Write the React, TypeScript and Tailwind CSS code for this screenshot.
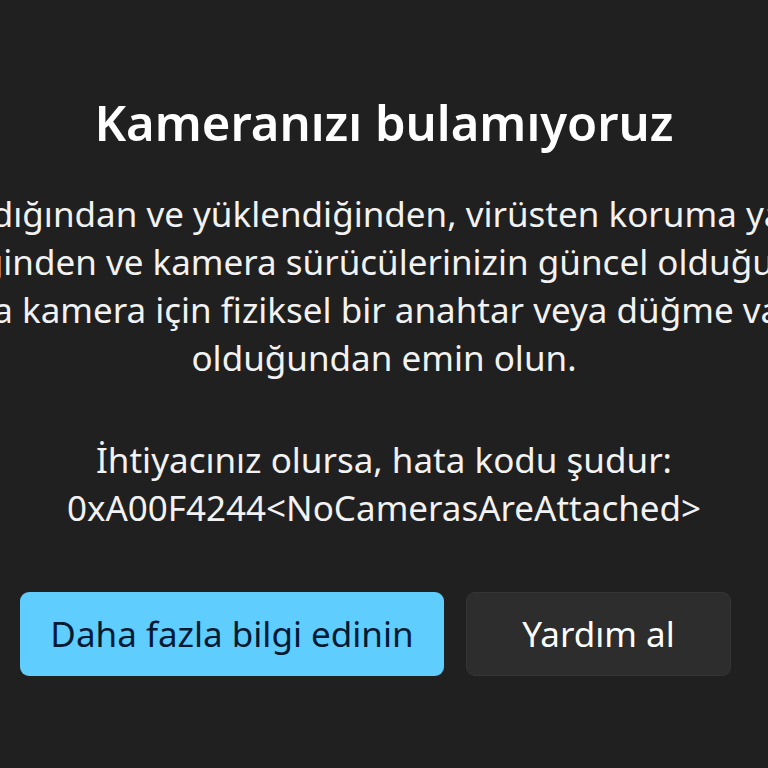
import React from "react";

const font = { fontFamily: '"Noto Sans", "Open Sans", sans-serif' };

function Line({ pre, mid, post }: { pre: string; mid: string; post: string }) {
  return (
    <div className="flex justify-center whitespace-nowrap">
      <span>
        {pre}
        {mid}
        {post}
      </span>
    </div>
  );
}

export default function App() {
  return (
    <div
      className="w-[768px] h-[768px] overflow-hidden bg-[#202020] text-white flex flex-col items-center"
      style={font}
    >
      <h1 className="mt-[92px] text-[49px] leading-[60px] font-semibold whitespace-nowrap">
        Kameranızı bulamıyoruz
      </h1>
      <div className="mt-[38px] w-[768px] text-[35px] leading-[48px] text-[#f2f2f2]">
        <Line pre="Kameranın bağlan" mid="dığından ve yüklendiğinden, virüsten koruma ya" post="zılımı tarafından e" />
        <Line pre="engellenmediğ" mid="inden ve kamera sürücülerinizin güncel olduğun" post="dan emin olu" />
        <Line pre="Bilgisayarınızd" mid="a kamera için fiziksel bir anahtar veya düğme va" post="rsa, bunun açı" />
        <Line pre="" mid="olduğundan emin olun." post="" />
      </div>
      <div className="mt-[54px] text-[35px] leading-[48px] text-[#f2f2f2] text-center whitespace-nowrap">
        <div>İhtiyacınız olursa, hata kodu şudur:</div>
        <div>0xA00F4244&lt;NoCamerasAreAttached&gt;</div>
      </div>
      <div className="mt-[60px] w-full flex pl-[20px] gap-[22px]">
        <button className="w-[424px] h-[84px] rounded-[9px] bg-[#60cdff] text-[#001a33] text-[35px] flex items-center justify-center">
          Daha fazla bilgi edinin
        </button>
        <button className="w-[265px] h-[84px] rounded-[9px] bg-[#2d2d2d] border border-[#353535] text-white text-[35px] flex items-center justify-center">
          Yardım al
        </button>
      </div>
    </div>
  );
}
